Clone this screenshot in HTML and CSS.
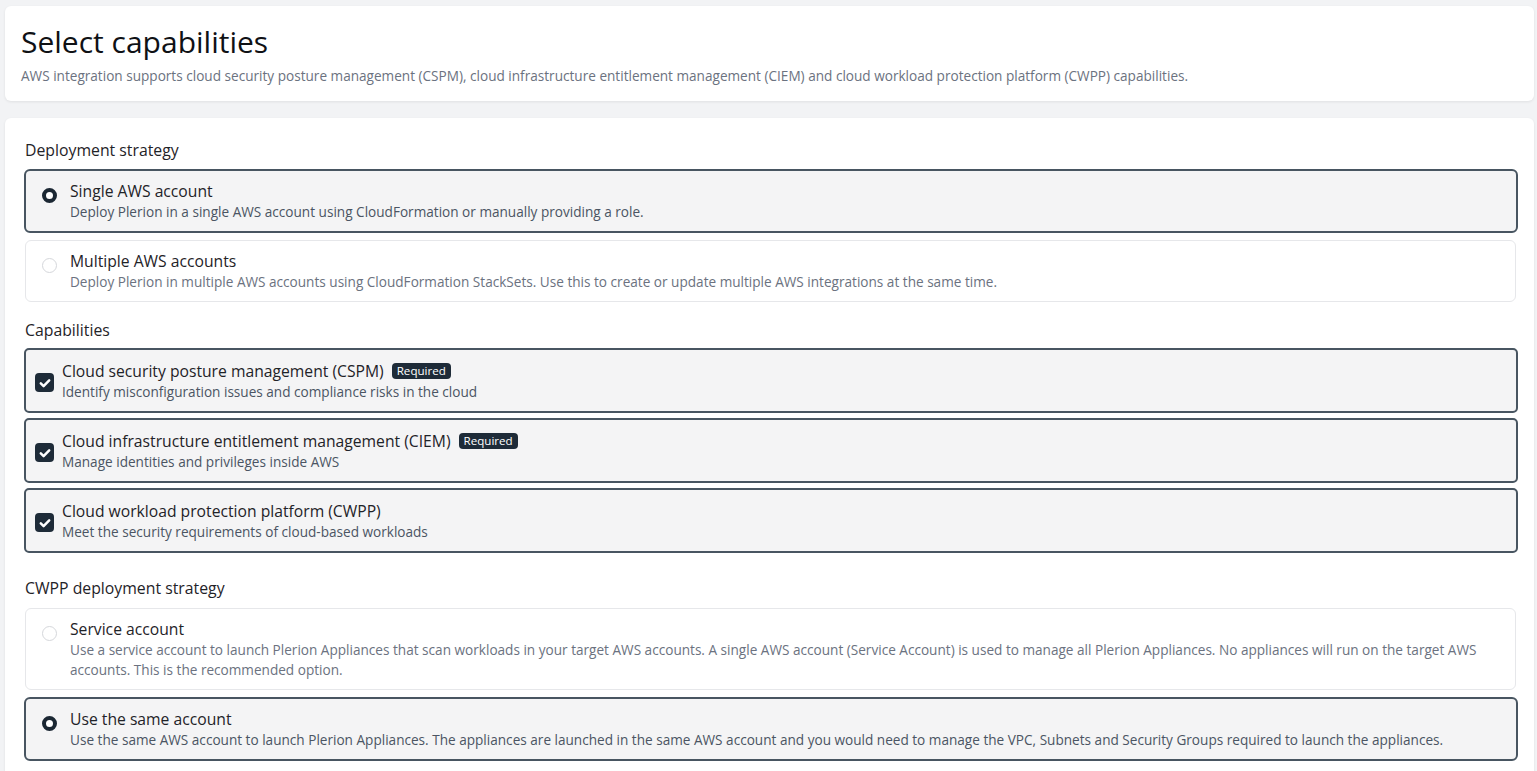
FILE: index.html
```html
<!DOCTYPE html>
<html lang="en">
<head>
<meta charset="utf-8">
<title>Select capabilities</title>
<link rel="stylesheet" href="styles.css">
</head>
<body>
<div class="page">
  <section class="card header">
    <h1 class="title">Select capabilities</h1>
    <p class="subtitle">AWS integration supports cloud security posture management (CSPM), cloud infrastructure entitlement management (CIEM) and cloud workload protection platform (CWPP) capabilities.</p>
  </section>

  <section class="card body">
    <h2 class="group-label">Deployment strategy</h2>
    <div class="options">
      <div class="option selected">
        <span class="radio on"></span>
        <div class="opt-text">
          <div class="opt-title">Single AWS account</div>
          <div class="opt-desc">Deploy Plerion in a single AWS account using CloudFormation or manually providing a role.</div>
        </div>
      </div>
      <div class="option">
        <span class="radio"></span>
        <div class="opt-text">
          <div class="opt-title">Multiple AWS accounts</div>
          <div class="opt-desc">Deploy Plerion in multiple AWS accounts using CloudFormation StackSets. Use this to create or update multiple AWS integrations at the same time.</div>
        </div>
      </div>
    </div>

    <h2 class="group-label caps">Capabilities</h2>
    <div class="checks">
      <div class="check-card">
        <span class="checkbox"><svg viewBox="0 0 18 18" width="18" height="18"><path d="M4.8 9.4l2.8 2.7L13.2 6.4" fill="none" stroke="#fff" stroke-width="2.5" stroke-linecap="round" stroke-linejoin="round"/></svg></span>
        <div class="opt-text">
          <div class="opt-title">Cloud security posture management (CSPM) <span class="badge">Required</span></div>
          <div class="opt-desc">Identify misconfiguration issues and compliance risks in the cloud</div>
        </div>
      </div>
      <div class="check-card">
        <span class="checkbox"><svg viewBox="0 0 18 18" width="18" height="18"><path d="M4.8 9.4l2.8 2.7L13.2 6.4" fill="none" stroke="#fff" stroke-width="2.5" stroke-linecap="round" stroke-linejoin="round"/></svg></span>
        <div class="opt-text">
          <div class="opt-title">Cloud infrastructure entitlement management (CIEM) <span class="badge">Required</span></div>
          <div class="opt-desc">Manage identities and privileges inside AWS</div>
        </div>
      </div>
      <div class="check-card">
        <span class="checkbox"><svg viewBox="0 0 18 18" width="18" height="18"><path d="M4.8 9.4l2.8 2.7L13.2 6.4" fill="none" stroke="#fff" stroke-width="2.5" stroke-linecap="round" stroke-linejoin="round"/></svg></span>
        <div class="opt-text">
          <div class="opt-title">Cloud workload protection platform (CWPP)</div>
          <div class="opt-desc">Meet the security requirements of cloud-based workloads</div>
        </div>
      </div>
    </div>

    <h2 class="group-label cwpp">CWPP deployment strategy</h2>
    <div class="options">
      <div class="option">
        <span class="radio"></span>
        <div class="opt-text">
          <div class="opt-title">Service account</div>
          <div class="opt-desc">Use a service account to launch Plerion Appliances that scan workloads in your target AWS accounts. A single AWS account (Service Account) is used to manage all Plerion Appliances. No appliances will run on the target AWS accounts. This is the recommended option.</div>
        </div>
      </div>
      <div class="option selected">
        <span class="radio on"></span>
        <div class="opt-text">
          <div class="opt-title">Use the same account</div>
          <div class="opt-desc">Use the same AWS account to launch Plerion Appliances. The appliances are launched in the same AWS account and you would need to manage the VPC, Subnets and Security Groups required to launch the appliances.</div>
        </div>
      </div>
    </div>
  </section>
</div>
</body>
</html>
```

FILE: styles.css
```css
* { box-sizing: border-box; }
html, body { margin: 0; padding: 0; }
body {
  background: #f2f3f5;
  font-family: "Open Sans", "Liberation Sans", sans-serif;
  color: #1f2328;
  overflow: hidden;
  height: 771px;
}
.page {
  padding: 6px 3px 0 5px;
  display: flex;
  flex-direction: column;
  gap: 17px;
}
.card {
  background: #fff;
  border-radius: 6px;
  box-shadow: 0 1px 3px rgba(0,0,0,0.08);
}
.header {
  padding: 19px 16px 16px 16px;
}
.title {
  margin: 0;
  font-size: 30px;
  font-weight: 400;
  line-height: 34px;
  color: #0f1115;
}
.subtitle {
  margin: 8px 0 0 0;
  font-size: 13.6px;
  line-height: 18px;
  color: #6b7280;
}
.body {
  padding: 22px 16px 20px 19px;
  min-height: 700px;
}
.group-label {
  margin: 0 0 9px 1px;
  font-size: 15.8px;
  font-weight: 400;
  line-height: 20px;
  color: #1f2328;
}
.group-label.caps { margin-top: 18px; margin-bottom: 8px; }
.group-label.cwpp { margin-top: 25px; margin-bottom: 10px; }
.options {
  display: flex;
  flex-direction: column;
  gap: 7px;
}
.option {
  display: flex;
  align-items: flex-start;
  gap: 13px;
  margin: 0 2px 0 1px;
  padding: 9px 16px 9px 16px;
  border: 1px solid #e6e7ea;
  border-radius: 6px;
  background: #fff;
}
.option.selected {
  margin: 0;
  padding: 9px 17px 9px 16px;
  border: 2px solid #485561;
  background: #f4f4f5;
}
.radio {
  flex: none;
  width: 15px;
  height: 15px;
  margin-top: 8px;
  border-radius: 50%;
  border: 1px solid #d5d7db;
  background: #fff;
}
.radio.on {
  border: 4.5px solid #1b2733;
  background: #fff;
}
.opt-text { flex: 1; min-width: 0; }
.opt-title {
  font-size: 15.7px;
  line-height: 22px;
  height: 22px;
  color: #1f2328;
  display: flex;
  align-items: center;
}
.opt-desc {
  font-size: 13.6px;
  line-height: 20px;
  color: #6b7280;
}
.option.selected .opt-desc,
.check-card .opt-desc { color: #4b5563; }
.checks {
  display: flex;
  flex-direction: column;
  gap: 5px;
}
.check-card {
  display: flex;
  align-items: center;
  gap: 8px;
  height: 65px;
  padding: 1px 16px 0 9px;
  border: 2px solid #485561;
  border-radius: 5px;
  background: #f4f4f5;
}
.checkbox {
  flex: none;
  width: 19px;
  height: 19px;
  border-radius: 4px;
  background: #1e2b38;
  display: flex;
  align-items: center;
  justify-content: center;
  margin-top: 3px;
}
.badge {
  display: inline-block;
  margin-left: 8px;
  padding: 0 5px;
  height: 16px;
  line-height: 16px;
  font-size: 11.6px;
  color: #fff;
  background: #1e2b38;
  border-radius: 4px;
}
```
